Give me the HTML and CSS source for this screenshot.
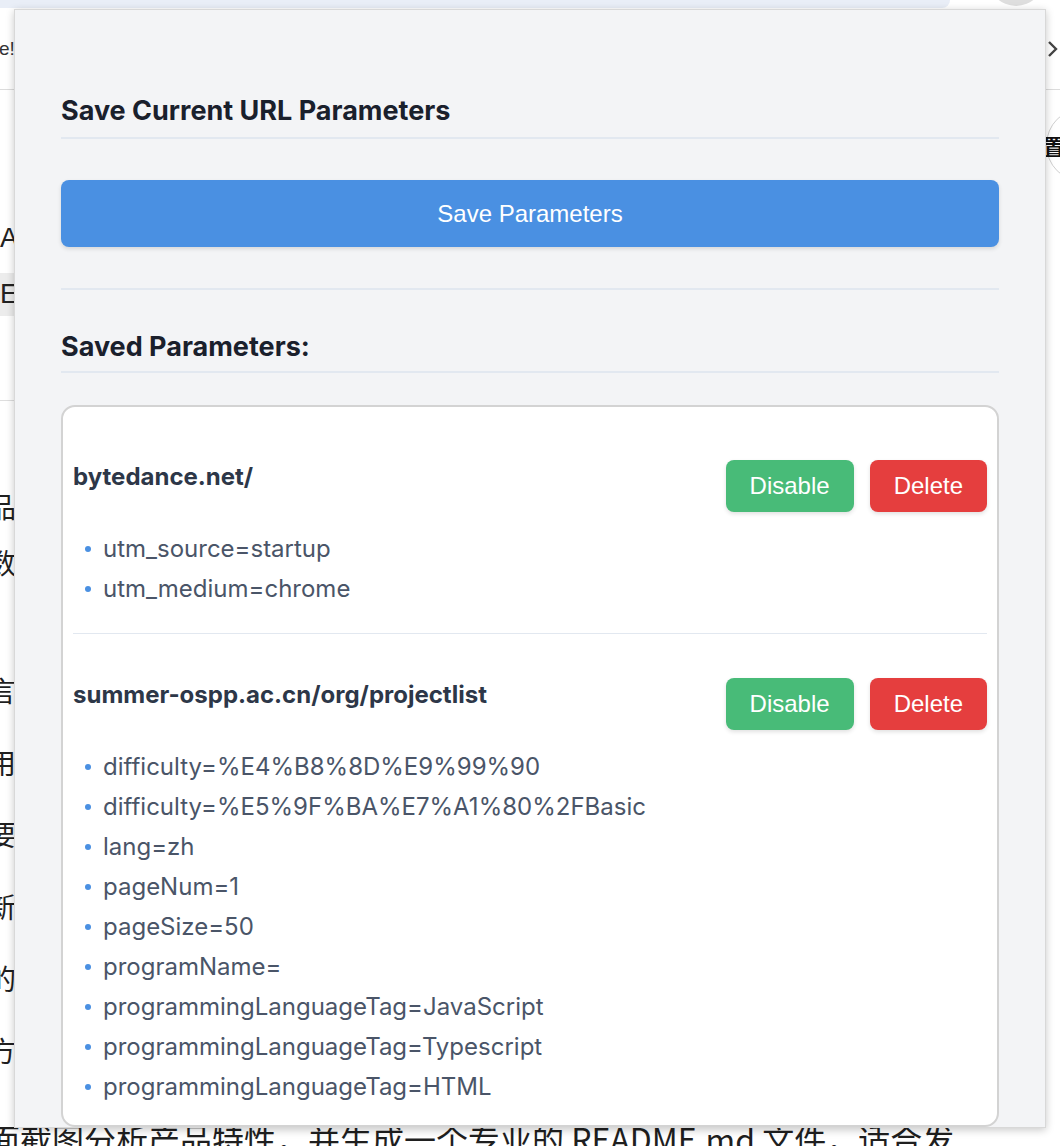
FILE: index.html
```html
<!DOCTYPE html>
<html lang="en">
<head>
<meta charset="utf-8">
<title>URL Parameters</title>
<link rel="stylesheet" href="styles.css">
</head>
<body>
<div class="bg">
  <div class="chrome-top">
    <div class="omnibox"></div>
    <div class="avatar"></div>
  </div>
  <div class="toolbar">
    <span class="tab-text">e!</span>
    <svg class="chevron" width="12" height="18" viewBox="0 0 12 18"><path d="M2 2 L9 9 L2 16" fill="none" stroke="#444" stroke-width="2.4"/></svg>
  </div>
  <div class="pill-row"><div class="pill">置顶</div></div>
  <div class="bg-a">A</div>
  <div class="bg-band"><span>EA</span></div>
  <div class="bg-line"></div>
  <div class="bg-chars">
    <div class="ch ch-tight first">品</div>
    <div class="ch ch-tight">数</div>
    <div class="ch ch-loose gap">言</div>
    <div class="ch ch-loose">用</div>
    <div class="ch ch-loose">要</div>
    <div class="ch ch-loose">新</div>
    <div class="ch ch-loose">的</div>
    <div class="ch ch-loose">方</div>
  </div>
  <div class="bg-bottom">面截图分析产品特性，并生成一个专业的 README.md 文件，适合发</div>
</div>

<div class="popup">
  <h2 class="section-title first-title">Save Current URL Parameters</h2>
  <button class="btn-save">Save Parameters</button>
  <hr class="divider">
  <h2 class="section-title">Saved Parameters:</h2>
  <div class="card">
    <div class="item">
      <div class="item-head">
        <h3 class="item-title">bytedance.net/</h3>
        <div class="actions">
          <button class="btn btn-disable">Disable</button>
          <button class="btn btn-delete">Delete</button>
        </div>
      </div>
      <ul class="params">
        <li>utm_source=startup</li>
        <li>utm_medium=chrome</li>
      </ul>
    </div>
    <div class="item">
      <div class="item-head">
        <h3 class="item-title">summer-ospp.ac.cn/org/projectlist</h3>
        <div class="actions">
          <button class="btn btn-disable">Disable</button>
          <button class="btn btn-delete">Delete</button>
        </div>
      </div>
      <ul class="params">
        <li>difficulty=%E4%B8%8D%E9%99%90</li>
        <li>difficulty=%E5%9F%BA%E7%A1%80%2FBasic</li>
        <li>lang=zh</li>
        <li>pageNum=1</li>
        <li>pageSize=50</li>
        <li>programName=</li>
        <li>programmingLanguageTag=JavaScript</li>
        <li>programmingLanguageTag=Typescript</li>
        <li>programmingLanguageTag=HTML</li>
      </ul>
    </div>
  </div>
</div>
</body>
</html>
```

FILE: styles.css
```css
html, body {
  margin: 0;
  padding: 0;
  background: #ffffff;
  overflow: hidden;
}

body {
  font-family: Inter, "Noto Sans", sans-serif;
  width: 1060px;
  height: 1146px;
  position: relative;
}

/* ---------- background page ---------- */
.bg {
  width: 1060px;
  height: 1146px;
  overflow: hidden;
  color: #1f1f1f;
  font-family: "Liberation Sans", "Noto Sans CJK SC", sans-serif;
}

.chrome-top {
  display: flex;
  height: 8px;
  position: relative;
}

.omnibox {
  width: 950px;
  height: 8px;
  background: #e9eef7;
  border-bottom-right-radius: 14px;
}

.avatar {
  width: 56px;
  height: 56px;
  margin-top: -50px;
  margin-left: 38px;
  border-radius: 50%;
  background: #dedede;
}

.toolbar {
  height: 81px;
  border-bottom: 1px solid #dcdcdc;
  display: flex;
  align-items: center;
  justify-content: space-between;
}

.tab-text {
  font-size: 19px;
  color: #333;
  margin-left: -1px;
}

.chevron {
  margin-right: 1px;
}

.pill-row {
  height: 110px;
  display: flex;
  justify-content: flex-end;
}

.pill {
  margin-top: 18px;
  height: 74px;
  width: 130px;
  margin-right: -116px;
  box-sizing: border-box;
  border: 1px solid #cfcfcf;
  border-radius: 37px;
  font-family: "Noto Sans CJK SC", sans-serif;
  font-size: 22px;
  font-weight: 700;
  line-height: 72px;
  color: #111;
  text-indent: -4px;
}

.bg-a {
  margin-top: 18px;
  height: 40px;
  line-height: 40px;
  font-size: 27px;
  color: #222;
}

.bg-band {
  margin-top: 15px;
  height: 43px;
  line-height: 43px;
  width: 40px;
  background: #ececec;
  font-size: 27px;
  color: #222;
}

.bg-line {
  margin-top: 84px;
  border-top: 1px solid #dedede;
  width: 40px;
}

.bg-chars {
  font-family: "Noto Sans CJK SC", sans-serif;
  font-size: 28px;
  color: #1f1f1f;
}

.ch {
  margin-left: -12px;
}

.ch-tight {
  line-height: 56px;
}

.ch-tight.first {
  margin-top: 77px;
}

.ch-loose {
  line-height: 72px;
}

.ch-loose.gap {
  margin-top: 64px;
}

.bg-bottom {
  margin-top: 36px;
  margin-left: -12px;
  font-family: "Noto Sans CJK SC", sans-serif;
  font-size: 32px;
  line-height: 32px;
  white-space: nowrap;
  color: #1f1f1f;
}

/* ---------- popup ---------- */
.popup {
  position: absolute;
  left: 14px;
  top: 9px;
  width: 1032px;
  height: 1119px;
  box-sizing: border-box;
  border: 1px solid #d8d8d8;
  background: #f3f4f6;
  padding: 85px 46px 0;
  overflow: hidden;
  box-shadow: 0 2px 8px rgba(0, 0, 0, 0.22);
}

.section-title {
  margin: 41px 0 0;
  font-family: Inter, "Noto Sans", sans-serif;
  font-size: 27px;
  line-height: 32px;
  font-weight: 700;
  color: #1a202c;
  padding-bottom: 8px;
  border-bottom: 2px solid #e2e8f0;
}

.section-title.first-title {
  margin-top: 0;
  padding-bottom: 10px;
}

.btn-save {
  display: block;
  width: 100%;
  height: 67px;
  margin-top: 41px;
  border: none;
  border-radius: 8px;
  background: #4a90e2;
  color: #ffffff;
  font-family: "Liberation Sans", Arial, sans-serif;
  font-size: 24px;
  box-shadow: 0 2px 4px rgba(0, 0, 0, 0.12);
}

.divider {
  margin: 41px 0 0;
  border: 0;
  border-top: 2px solid #e2e8f0;
  height: 0;
}

.card {
  margin-top: 32px;
  border: 2px solid #d3d3d3;
  border-radius: 14px;
  background: #ffffff;
  padding: 9px 10px 10px;
}

.item {
  padding: 44px 0 24px;
  border-bottom: 1px solid #e2e8f0;
}

.item:last-child {
  border-bottom: none;
  padding-bottom: 8px;
}

.item-head {
  display: flex;
  justify-content: space-between;
  align-items: flex-start;
}

.item-title {
  margin: 0;
  font-family: Inter, "Noto Sans", sans-serif;
  font-size: 24px;
  line-height: 34px;
  font-weight: 700;
  color: #2d3748;
}

.actions {
  display: flex;
  gap: 16px;
}

.btn {
  height: 52px;
  padding: 0 24px;
  border: none;
  border-radius: 8px;
  color: #ffffff;
  font-family: "Liberation Sans", Arial, sans-serif;
  font-size: 24px;
  box-shadow: 0 2px 4px rgba(0, 0, 0, 0.12);
}

.btn-disable {
  background: #48bb78;
}

.btn-delete {
  background: #e53e3e;
}

.params {
  list-style: none;
  margin: 17px 0 0;
  padding: 0 0 0 30px;
}

.params li {
  position: relative;
  font-family: Inter, "Noto Sans", sans-serif;
  font-size: 24px;
  line-height: 40px;
  color: #4a5568;
}

.params li::before {
  content: "";
  position: absolute;
  left: -18px;
  top: 17px;
  width: 6px;
  height: 6px;
  border-radius: 50%;
  background: #4a90e2;
}
```
